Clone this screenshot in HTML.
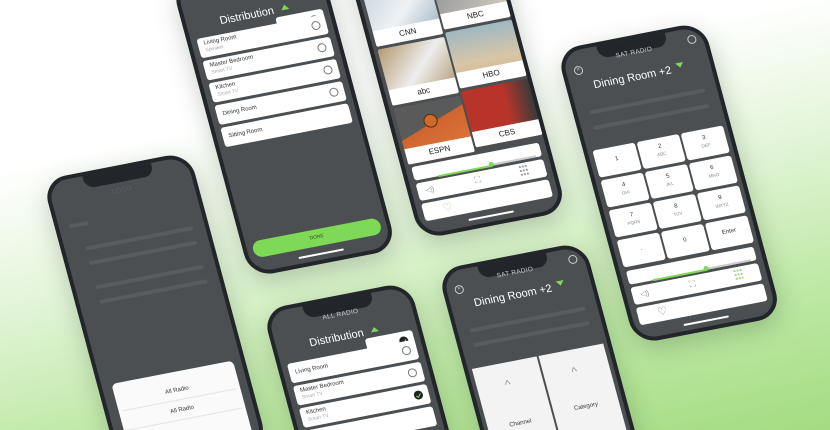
<!DOCTYPE html>
<html><head><meta charset="utf-8"><style>
*{box-sizing:border-box;margin:0;padding:0}
html{width:830px;height:430px;overflow:hidden}
body{width:830px;height:430px;overflow:hidden;position:relative;font-family:"Liberation Sans",sans-serif;
background:linear-gradient(168deg,#ffffff 0%,#ffffff 28%,#e4f5da 50%,#bfe9a6 75%,#a4dc82 100%);}
.ph{position:absolute;width:150px;height:305px;border:4px solid #22262b;border-radius:24px;background:#4b4f52;
transform:matrix(0.98,-0.19,0.26,0.966,0,0);transform-origin:0 0;overflow:hidden;box-shadow:0 8px 24px rgba(40,60,40,.25)}
.notch{position:absolute;left:36px;top:-1px;width:70px;height:14px;background:#22262b;border-radius:0 0 10px 10px}
.a{position:absolute}
.hd{position:absolute;left:0;width:142px;text-align:center;color:#c9cccd;font-size:6.5px;letter-spacing:.3px}
.tt{position:absolute;left:0;width:142px;text-align:center;color:#fff;font-size:11px}
.card{position:absolute;left:6px;width:130px;height:20px;background:#fff;border-radius:3px;color:#333;font-size:6px;padding:3px 0 0 6px;line-height:7px}
.card small{display:block;color:#aaa;font-size:5px}
.rd{position:absolute;right:6px;top:5px;width:9px;height:9px;border:1px solid #777;border-radius:50%}
.ck{position:absolute;right:6px;top:5px;width:9px;height:9px;background:#222;border-radius:50%}
.ck:after{content:"";position:absolute;left:3px;top:1.5px;width:2px;height:4px;border:solid #7ed957;border-width:0 1px 1px 0;transform:rotate(40deg)}
.tri{position:absolute;width:0;height:0;border-left:4px solid transparent;border-right:4px solid transparent;border-bottom:5px solid #7ed957}
.bar{position:absolute;left:48px;bottom:5px;width:46px;height:2px;background:#fff;border-radius:2px}
.tile{position:absolute;width:68px;height:58px;overflow:hidden;border-radius:2px}
.tile .lb{position:absolute;left:0;bottom:0;width:100%;height:16px;background:#fff;color:#222;font-size:8px;text-align:center;line-height:16px}
.key{position:absolute;width:43px;height:28px;background:#fff;border-radius:3px;text-align:center;color:#333;font-size:6px;padding-top:6px;line-height:7px}
.key small{display:block;font-size:4.5px;color:#888}
.wc{position:absolute;left:6px;width:130px;background:#fff;border-radius:3px}
.blur{position:absolute;height:4px;background:#585c5f;border-radius:2px}
</style></head><body>

<div class="ph" style="left:42px;top:180px">
 <div class="notch"></div>
 <div class="hd" style="top:18px;color:#5e6264">LOGO</div>
 <div class="blur" style="left:10px;top:45px;width:20px"></div>
 <div class="blur" style="left:20px;top:70px;width:110px"></div>
 <div class="blur" style="left:20px;top:85px;width:110px"></div>
 <div class="blur" style="left:20px;top:110px;width:110px"></div>
 <div class="blur" style="left:20px;top:125px;width:110px"></div>
 <div class="wc" style="top:210px;left:10px;width:124px;height:100px;border-radius:5px 5px 0 0;background:#fafafa"></div>
 <div class="a" style="left:10px;top:226px;width:124px;text-align:center;font-size:6px;color:#333">All Radio</div>
 <div class="a" style="left:14px;top:238px;width:116px;height:1px;background:#e4e4e4"></div>
 <div class="a" style="left:10px;top:246px;width:124px;text-align:center;font-size:6px;color:#333">All Radio</div>
 <div class="a" style="left:14px;top:258px;width:116px;height:1px;background:#e4e4e4"></div>
</div>

<div class="ph" style="left:171px;top:-17px">
 <div class="notch"></div>
 <div class="tt" style="top:37px;left:-10px">Distribution</div>
 <div class="tri" style="left:96px;top:39px"></div>
 <div class="card" style="left:88px;width:48px;top:50px"><div class="rd"></div></div>
 <div class="card" style="top:56px">Living Room<small>Speaker</small><div class="rd"></div></div>
 <div class="card" style="top:79px">Master Bedroom<small>Smart TV</small><div class="rd"></div></div>
 <div class="card" style="top:102px">Kitchen<small>Smart TV</small><div class="rd"></div></div>
 <div class="card" style="top:125px;padding-top:7px">Dining Room<div class="rd"></div></div>
 <div class="card" style="top:148px;padding-top:7px">Sitting Room</div>
 <div class="a" style="left:6px;top:266px;width:130px;height:17px;border-radius:9px;background:#7ed957;color:#2d4a22;font-size:5px;text-align:center;line-height:17px">DONE</div>
 <div class="bar"></div>
</div>

<div class="ph" style="left:341px;top:-55px">
 <div class="notch"></div>
 <div class="tile" style="left:4px;top:45px;background:linear-gradient(135deg,#c9d5de,#eef2f5 50%,#9aaebd)"><div class="lb">CNN</div></div>
 <div class="tile" style="left:74px;top:41px;background:linear-gradient(135deg,#8a8f93,#d8cfc3)"><div class="lb">NBC</div></div>
 <div class="tile" style="left:4px;top:106px;background:linear-gradient(135deg,#b59a72,#eee 50%,#a98d64)"><div class="lb">abc</div></div>
 <div class="tile" style="left:74px;top:102px;background:linear-gradient(180deg,#9fb8c2,#d9c6a6 60%,#c9b08a)"><div class="lb">HBO</div></div>
 <div class="tile" style="left:4px;top:167px;background:linear-gradient(160deg,#5a5a5a 40%,#d0642f 41%,#e07a3f)"><div class="a" style="left:26px;top:12px;width:14px;height:14px;border-radius:50%;background:#d06a2a;border:1px solid #5a2a10"></div><div class="lb">ESPN</div></div>
 <div class="tile" style="left:74px;top:163px;background:linear-gradient(90deg,#b8342a 60%,#3b3b3b)"><div class="lb">CBS</div></div>
 <div class="wc" style="top:228px;height:14px"></div>
 <div class="a" style="left:30px;top:241px;width:55px;height:1.5px;background:#7ed957"></div>
 <div class="a" style="left:85px;top:240px;width:45px;height:1.5px;background:#ccc"></div>
 <div class="a" style="left:82px;top:238px;width:5px;height:5px;border-radius:50%;background:#7ed957"></div>
 <div class="wc" style="top:245px;height:18px"></div>
 <div class="a" style="left:14px;top:249px;font-size:8px;color:#999">◁)</div>
 <div class="a" style="left:64px;top:248px;font-size:9px;color:#999">⛶</div>
 <div class="a" style="left:110px;top:247px;font-size:5px;color:#999;line-height:4px">●●●<br>●●●<br>●●●</div>
 <div class="wc" style="top:266px;height:18px"></div>
 <div class="a" style="left:26px;top:268px;font-size:11px;color:#9ad77c">♡</div>
 <div class="bar"></div>
</div>

<div class="ph" style="left:262px;top:310px">
 <div class="notch"></div>
 <div class="hd" style="top:12px">ALL RADIO</div>
 <div class="tt" style="top:32px;left:-10px">Distribution</div>
 <div class="tri" style="left:96px;top:34px"></div>
 <div class="card" style="left:88px;width:48px;top:44px"><div class="ck"></div></div>
 <div class="card" style="top:54px;padding-top:7px">Living Room<div class="rd"></div></div>
 <div class="card" style="top:77px">Master Bedroom<small>Smart TV</small><div class="rd"></div></div>
 <div class="card" style="top:100px">Kitchen<small>Smart TV</small><div class="ck"></div></div>
 <div class="card" style="top:123px"></div>
</div>

<div class="ph" style="left:437px;top:270px">
 <div class="notch"></div>
 <div class="hd" style="top:10px">SAT RADIO</div>
 <div class="tt" style="top:30px;left:-8px">Dining Room +2</div>
 <div class="tri" style="left:108px;top:30px;transform:rotate(180deg)"></div>
 <div class="a" style="left:8px;top:15px;width:9px;height:9px;border:1px solid #ccc;border-radius:50%;font-size:6px;color:#ccc;line-height:7px;text-align:center">×</div>
 <div class="a" style="left:126px;top:7px;width:9px;height:9px;border:1px solid #ccc;border-radius:50%"></div>
 <div class="blur" style="left:12px;top:60px;width:118px"></div>
 <div class="blur" style="left:12px;top:75px;width:118px"></div>
 <div class="a" style="left:4px;top:100px;width:66px;height:200px;background:#f3f3f3"></div>
 <div class="a" style="left:72px;top:100px;width:66px;height:200px;background:#f3f3f3"></div>
 <div class="a" style="left:32px;top:115px;font-size:12px;color:#999">^</div>
 <div class="a" style="left:100px;top:115px;font-size:12px;color:#999">^</div>
 <div class="a" style="left:4px;top:160px;width:66px;text-align:center;font-size:6px;color:#333">Channel</div>
 <div class="a" style="left:72px;top:156px;width:66px;text-align:center;font-size:6px;color:#333">Category</div>
</div>

<div class="ph" style="left:556px;top:50px">
 <div class="notch"></div>
 <div class="hd" style="top:10px">SAT RADIO</div>
 <div class="tt" style="top:32px;left:-8px">Dining Room +2</div>
 <div class="tri" style="left:108px;top:32px;transform:rotate(180deg)"></div>
 <div class="a" style="left:8px;top:16px;width:9px;height:9px;border:1px solid #ccc;border-radius:50%;font-size:6px;color:#ccc;line-height:7px;text-align:center">×</div>
 <div class="a" style="left:126px;top:7px;width:9px;height:9px;border:1px solid #ccc;border-radius:50%"></div>
 <div class="blur" style="left:12px;top:62px;width:118px"></div>
 <div class="blur" style="left:12px;top:78px;width:118px"></div>
 <div class="key" style="left:5px;top:102px;padding-top:10px">1</div>
 <div class="key" style="left:50px;top:102px">2<small>ABC</small></div>
 <div class="key" style="left:95px;top:102px">3<small>DEF</small></div>
 <div class="key" style="left:5px;top:133px">4<small>GHI</small></div>
 <div class="key" style="left:50px;top:133px">5<small>JKL</small></div>
 <div class="key" style="left:95px;top:133px">6<small>MNO</small></div>
 <div class="key" style="left:5px;top:164px">7<small>PQRS</small></div>
 <div class="key" style="left:50px;top:164px">8<small>TUV</small></div>
 <div class="key" style="left:95px;top:164px">9<small>WXYZ</small></div>
 <div class="key" style="left:5px;top:195px;padding-top:10px">.</div>
 <div class="key" style="left:50px;top:195px;padding-top:10px">0</div>
 <div class="key" style="left:95px;top:195px;padding-top:10px">Enter</div>
 <div class="wc" style="top:227px;height:14px"></div>
 <div class="a" style="left:30px;top:240px;width:55px;height:1.5px;background:#7ed957"></div>
 <div class="a" style="left:85px;top:239px;width:45px;height:1.5px;background:#ccc"></div>
 <div class="a" style="left:82px;top:237px;width:5px;height:5px;border-radius:50%;background:#7ed957"></div>
 <div class="wc" style="top:244px;height:18px"></div>
 <div class="a" style="left:14px;top:248px;font-size:8px;color:#999">◁)</div>
 <div class="a" style="left:64px;top:247px;font-size:9px;color:#999">⛶</div>
 <div class="a" style="left:110px;top:246px;font-size:5px;color:#9ad77c;line-height:4px">●●●<br>●●●<br>●●●</div>
 <div class="wc" style="top:265px;height:18px"></div>
 <div class="a" style="left:26px;top:267px;font-size:11px;color:#777">♡</div>
 <div class="bar"></div>
</div>

</body></html>
